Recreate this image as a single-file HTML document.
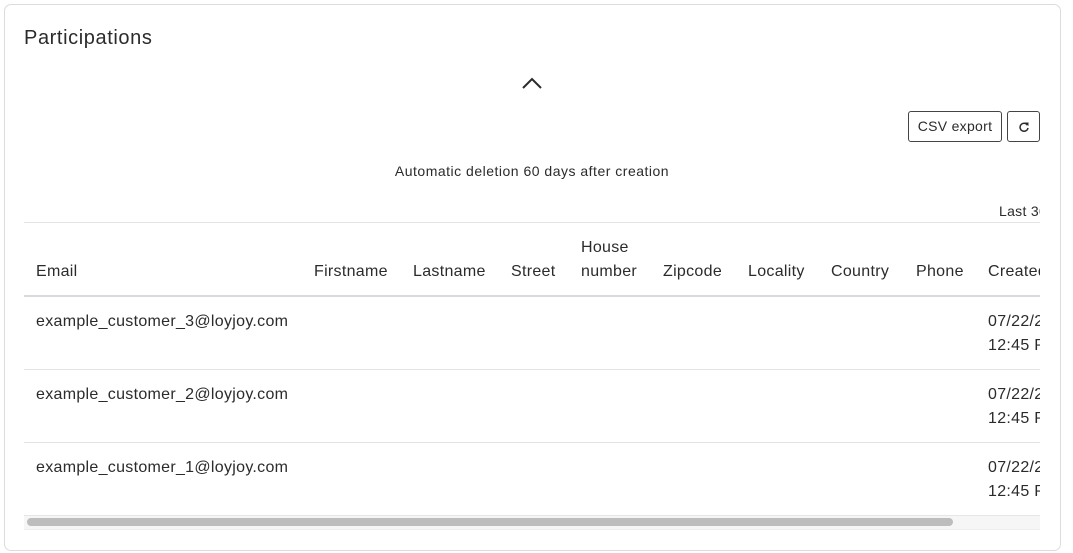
<!DOCTYPE html>
<html><head><meta charset="utf-8"><style>
*{margin:0;padding:0;box-sizing:border-box}
body{width:1073px;height:553px;background:#fff;font-family:"Liberation Sans",sans-serif;color:#2b2b2b;position:relative;overflow:hidden}
.card{position:absolute;left:4px;top:4px;width:1057px;height:547px;border:1px solid #dcdcdc;border-radius:7px}
.t{position:absolute;line-height:20px;white-space:nowrap;font-size:16px;letter-spacing:0.3px}
.h{position:absolute;height:1px;background:#e3e3e3;left:24px;width:1016px}
.btn{position:absolute;border:1px solid #444;border-radius:3px;background:#fff;font-size:14px;text-align:center;line-height:29px;letter-spacing:0.3px}
.clip{position:absolute;left:24px;top:0;width:1016px;height:553px;overflow:hidden}
.clip .t{margin-top:2px}
</style></head><body>
<div class="card"></div>
<div class="t" style="left:24px;top:27px;font-size:20px;line-height:22px;letter-spacing:0.6px">Participations</div>
<svg style="position:absolute;left:521px;top:76px" width="22" height="14"><path d="M2 12 L11 3 L20 12" fill="none" stroke="#2b2b2b" stroke-width="2"/></svg>
<div class="btn" style="left:908px;top:111px;width:94px;height:31px">CSV export</div>
<div class="btn" style="left:1007px;top:111px;width:33px;height:31px">
<svg style="position:absolute;left:10px;top:9px" width="12" height="12" viewBox="0 0 12 12"><path d="M9.5 4.2 A4 4 0 1 0 10 7" fill="none" stroke="#2b2b2b" stroke-width="1.5"/><path d="M7 1.5 L10.5 1.5 L10.5 5 Z" fill="#2b2b2b"/></svg></div>
<div class="t" style="left:0;width:1064px;text-align:center;top:161px;font-size:14px;letter-spacing:0.5px">Automatic deletion 60 days after creation</div>
<div class="clip">
<div class="t" style="left:975px;top:199px;font-size:14px">Last 30 days</div>
<div class="t" style="left:12px;top:260px">Email</div>
<div class="t" style="left:290px;top:260px">Firstname</div>
<div class="t" style="left:389px;top:260px">Lastname</div>
<div class="t" style="left:487px;top:260px">Street</div>
<div class="t" style="left:557px;top:236px">House</div>
<div class="t" style="left:557px;top:260px">number</div>
<div class="t" style="left:639px;top:260px">Zipcode</div>
<div class="t" style="left:724px;top:260px">Locality</div>
<div class="t" style="left:807px;top:260px">Country</div>
<div class="t" style="left:892px;top:260px">Phone</div>
<div class="t" style="left:964px;top:260px">Created</div>
<div class="t" style="left:12px;top:310px">example_customer_3@loyjoy.com</div>
<div class="t" style="left:964px;top:310px">07/22/2024</div>
<div class="t" style="left:964px;top:334px">12:45 PM</div>
<div class="t" style="left:12px;top:383px">example_customer_2@loyjoy.com</div>
<div class="t" style="left:964px;top:383px">07/22/2024</div>
<div class="t" style="left:964px;top:407px">12:45 PM</div>
<div class="t" style="left:12px;top:456px">example_customer_1@loyjoy.com</div>
<div class="t" style="left:964px;top:456px">07/22/2024</div>
<div class="t" style="left:964px;top:480px">12:45 PM</div>
</div>
<div class="h" style="top:222px"></div>
<div class="h" style="top:295px;height:2px;background:#d8dadd"></div>
<div class="h" style="top:369px"></div>
<div class="h" style="top:442px"></div>
<div class="h" style="top:515px;height:15px;background:#f6f6f6;border-top:1px solid #e6e6e6;border-bottom:1px solid #eee"></div>
<div style="position:absolute;left:27px;top:518px;width:926px;height:8px;border-radius:4px;background:#bdbdbd"></div>
</body></html>
